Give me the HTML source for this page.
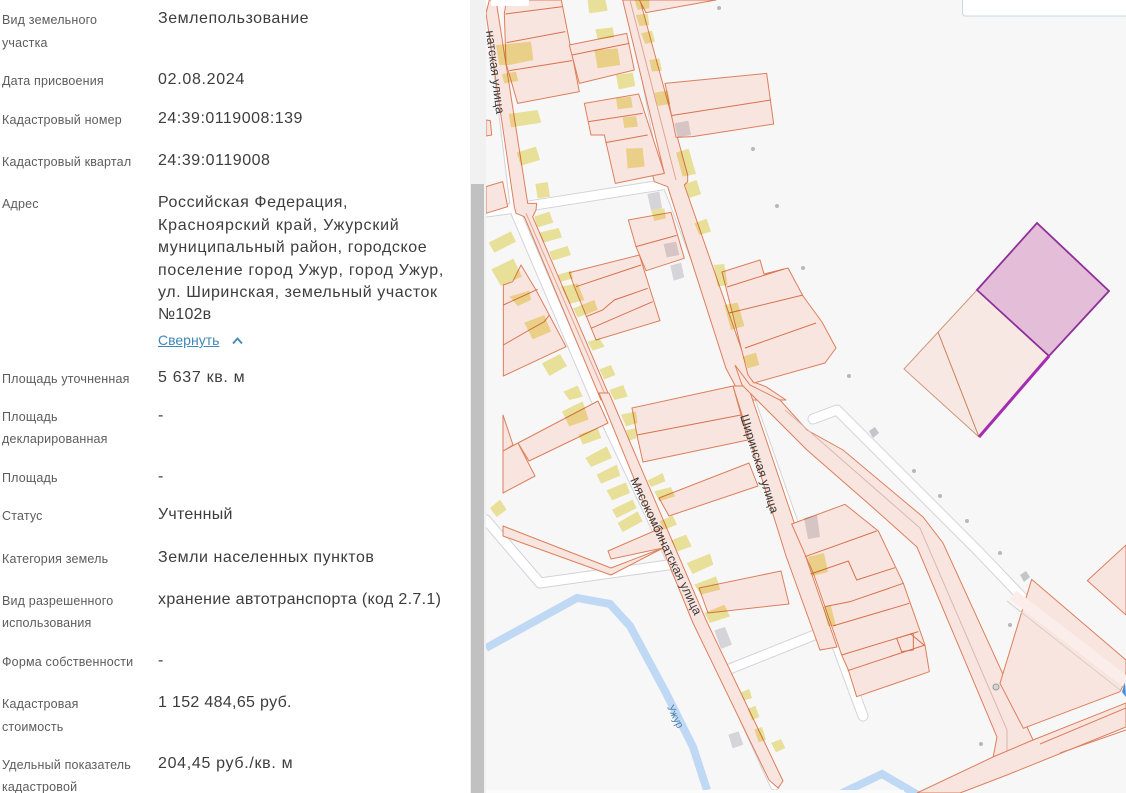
<!DOCTYPE html>
<html lang="ru"><head><meta charset="utf-8"><title>Участок</title>
<style>
html,body{margin:0;padding:0;width:1126px;height:793px;overflow:hidden;background:#fff}
body{position:relative;font-family:"Liberation Sans","DejaVu Sans",sans-serif}
.l,.v{position:absolute;white-space:nowrap;height:20px;line-height:20px;z-index:3}
.l{left:2px;font-size:12.5px;color:#5c5c5c;letter-spacing:.18px}
.v{left:158px;font-size:16px;color:#3d3d3d;letter-spacing:.55px}
#sb{position:absolute;left:470px;top:0;width:16px;height:793px;background:#f1f1f1;z-index:2}
#th{position:absolute;left:471px;top:184px;width:13px;height:609px;background:#c1c1c1;z-index:2}
#pn{position:absolute;left:0;top:0;width:470px;height:793px;background:#fff;z-index:2}
svg{position:absolute;left:0;top:0}
.p polygon,.p polyline{fill:#f9e5e0;stroke:#dc7f5c;stroke-width:3;stroke-linejoin:round}
.p line,.p path{stroke:#d8714c;stroke-width:3;fill:none}
.y{mix-blend-mode:multiply}
.y polygon{fill:#f0e79c;stroke:none}
.g{mix-blend-mode:multiply}
.g polygon{fill:#dcdce0;stroke:none}
.d circle{fill:#b5b8bc;stroke:none}
text{font-family:"Liberation Sans",sans-serif;font-size:12.500px;fill:#3a3a3a}
</style></head><body>
<svg width="1126" height="793" viewBox="0 0 1126 793" xmlns="http://www.w3.org/2000/svg">
<rect x="486" y="0" width="640" height="793" fill="#f7f7f8"/>

<!-- white roads -->
<g fill="none" stroke-linejoin="round" stroke-linecap="round">
<g stroke="#d3d3d8" stroke-width="11">
<polyline points="486,212 516,208 668,184"/>
<polyline points="490,0 516,213 596,400 702,625 775,785"/>
<polyline points="632,0 666,180 750,400 820,600 863,716"/>
<polyline points="486,520 540,583 668,565"/>
<polyline points="727,670 822,632"/>
<polyline points="813,419 837,410 980,553 1022,597 1126,682"/>
</g>
<g stroke="#ffffff" stroke-width="9">
<polyline points="486,212 516,208 668,184"/>
<polyline points="490,0 516,213 596,400 702,625 775,785"/>
<polyline points="632,0 666,180 750,400 820,600 863,716"/>
<polyline points="486,520 540,583 668,565"/>
<polyline points="727,670 822,632"/>
<polyline points="813,419 837,410 980,553 1022,597 1126,682"/>
</g>
</g>

<!-- river -->
<polyline points="486,648 577,598 610,604 630,626 666,693 693,747 707,790" fill="none" stroke="#bfd9f5" stroke-width="8"/>
<polyline points="838,795 882,774 918,795" fill="none" stroke="#bfd9f5" stroke-width="8"/>

<!-- road strips -->
<g class="p" transform="translate(486,0) scale(.33333)">
<polygon points="0,40 10,0 30,0 125,610 152,610 150,630 140,650 375,1200 345,1200 115,650 90,640 85,620"/>
<polygon points="410,0 462,0 605,525 605,545 595,555 800,1145 840,1160 900,1200 770,1200 720,1105 545,560 505,545 500,525 535,520"/>
<line x1="432" y1="0" x2="570" y2="540" style="stroke:#e0a58f"/>
<line x1="120" y1="640" x2="360" y2="1190" style="stroke:#e0a58f"/>
</g>
<polygon points="599,393 609,393 706,620 783,781 778,788 769,780 693,623" fill="#f9e5e0" stroke="#dc7f5c" stroke-width="1"/>
<polygon points="733,386 748,386 800,540 837,647 820,650 786,556" fill="#f9e5e0" stroke="#dc7f5c" stroke-width="1"/>
<polygon points="735,365 750,385 780,400 807,430 843,450 923,517 943,543 1033,740 993,758 997,737 917,547 870,505 807,450 742,385" fill="#f9e5e0" stroke="#dc7f5c" stroke-width="1"/>
<polyline points="785,410 920,528 1007,730 1007,752" fill="none" stroke="#d9b8b0" stroke-width="1"/>
<polygon points="917,793 993,757 1033,740 1126,703 1126,727 1007,775 960,793" fill="#f9e5e0" stroke="#dc7f5c" stroke-width="1"/>
<line x1="1040" y1="744" x2="1126" y2="708" stroke="#dc7f5c" stroke-width="1"/>
<polyline points="1060,753 1126,730" fill="none" stroke="#dc7f5c" stroke-width="1"/>

<!-- parcels upper -->
<g class="p" transform="translate(486,0) scale(.33333)">
<polygon points="55,40 62,0 226,0 280,275 95,310 60,190"/>
<line x1="58" y1="42" x2="230" y2="20"/><line x1="62" y1="128" x2="238" y2="95"/><line x1="70" y1="212" x2="258" y2="182"/>
<polygon points="250,135 422,100 445,210 280,250"/><line x1="258" y1="165" x2="430" y2="130"/>
<polygon points="295,310 458,282 535,520 388,550 355,405 315,405"/><line x1="308" y1="365" x2="470" y2="340"/><line x1="358" y1="428" x2="485" y2="405"/>
<polygon points="537,250 842,220 863,372 620,410 570,412"/><line x1="555" y1="347" x2="855" y2="300"/>
<polygon points="460,0 480,38 690,0"/>
<polygon points="427,660 555,637 595,775 480,812 450,740"/><line x1="450" y1="740" x2="572" y2="706"/>
<polygon points="250,818 460,765 522,962 330,1020 265,860"/>
<line x1="270" y1="860" x2="465" y2="795"/><path d="M300 950L350 930L385 900L485 865"/><line x1="315" y1="985" x2="500" y2="905"/>
<polygon points="52,855 80,845 105,795 150,870 240,1040 52,1128"/>
<line x1="52" y1="915" x2="155" y2="868"/><path d="M52 1035L130 990L175 965L190 945"/>
<polygon points="0,560 50,545 65,620 0,640"/><polygon points="0,360 13,362 17,405 0,408"/>
</g>
<g class="p">
<polygon style="stroke-width:1" points="722,272 760,260 764,274 788,268 803,296 822,322 836,348 825,363 754,383 748,375"/>
<line style="stroke-width:1" x1="727" y1="287" x2="784" y2="269"/>
<line style="stroke-width:1" x1="729" y1="313" x2="803" y2="295"/>
<line style="stroke-width:1" x1="745" y1="348" x2="816" y2="323"/>
<polygon style="stroke-width:1" points="632,408 733,386 748,440 643,462 638,440"/>
<line style="stroke-width:1" x1="637" y1="435" x2="741" y2="415"/>
<polygon style="stroke-width:1" points="659,498 749,463 758,486 669,516"/>
<polygon style="stroke-width:1" points="608,551 661,528 663,548 611,559"/>
<polygon style="stroke-width:1" points="503,526 611,568 663,548 611,575 503,536"/>
<polygon style="stroke-width:1" points="699,588 781,571 789,604 708,613"/>
<polygon style="stroke-width:1" points="518,443 598,401 608,423 529,461"/>
<polygon style="stroke-width:1" points="503,451 518,443 535,476 503,493"/>
<polygon style="stroke-width:1" points="503,415 513,445 503,451"/>
</g>
<g class="p" transform="translate(780,450) scale(.33333)">
<polygon points="35,222 195,163 295,243 370,400 435,585 448,665 230,740 205,660 185,615 100,370"/>
<line x1="75" y1="320" x2="290" y2="243"/><path d="M92 372L205 333L230 390L345 353"/><path d="M135 470L210 455L370 400"/><line x1="158" y1="528" x2="388" y2="460"/><line x1="185" y1="615" x2="415" y2="545"/><line x1="203" y1="662" x2="435" y2="585"/>
<path d="M350 565L400 550L400 600L365 605Z"/><line x1="390" y1="550" x2="432" y2="585"/>
<polygon points="755,388 1038,630 1038,690 1020,725 730,835 660,700"/>
<polygon points="1038,285 922,392 1038,495"/>
</g>

<!-- yellow + gray buildings over parcels -->
<g class="y"><g transform="translate(486,0) scale(.33333)">
<polygon points="305,0 358,0 365,32 310,40"/><polygon points="328,88 380,82 385,112 335,118"/>
<polygon points="30,135 135,125 142,180 70,195 40,195"/><polygon points="325,150 395,145 403,195 335,205"/>
<polygon points="48,222 90,215 97,243 55,250"/><polygon points="390,225 440,218 448,258 398,268"/>
<polygon points="390,295 435,290 440,322 395,328"/><polygon points="410,352 450,348 456,380 415,384"/>
<polygon points="68,342 155,330 166,368 75,382"/><polygon points="420,446 470,444 476,500 425,505"/>
<polygon points="92,458 150,440 162,480 105,497"/><polygon points="148,552 185,546 192,590 155,595"/>
<polygon points="445,0 490,0 490,25 455,30"/><polygon points="450,45 485,40 490,75 460,78"/>
<polygon points="465,100 498,92 507,125 478,132"/><polygon points="490,180 520,175 528,212 498,215"/>
<polygon points="505,278 545,272 553,312 515,318"/><polygon points="570,458 608,446 630,522 590,530"/>
<polygon points="595,552 632,540 645,582 610,594"/><polygon points="625,670 662,656 675,695 640,705"/>
<polygon points="495,630 535,625 540,655 505,663"/><polygon points="145,650 190,635 202,668 155,682"/>
<polygon points="160,698 218,684 228,712 172,728"/><polygon points="190,755 245,738 255,765 200,782"/>
<polygon points="8,728 75,694 90,725 25,758"/><polygon points="16,808 82,776 108,830 45,858"/>
<polygon points="70,890 130,872 135,900 95,918"/><polygon points="115,968 175,945 195,995 140,1018"/>
<polygon points="168,1090 222,1062 243,1098 190,1128"/><polygon points="215,825 255,812 262,835 225,845"/>
<polygon points="225,860 275,850 295,900 250,912"/><polygon points="262,925 325,900 335,930 275,952"/>
<polygon points="305,1025 340,1015 356,1040 320,1052"/><polygon points="340,1108 375,1095 388,1125 355,1138"/>
<polygon points="232,1175 275,1157 290,1190 250,1200"/><polygon points="370,1170 412,1155 425,1190 385,1200"/>
<polygon points="683,795 715,792 725,855 695,860"/><polygon points="715,915 755,908 775,978 735,990"/>
<polygon points="770,1070 810,1058 820,1095 785,1105"/>
</g></g>
<g class="g"><g transform="translate(486,0) scale(.33333)">
<polygon points="484,582 520,575 528,625 495,630"/><polygon points="565,370 607,362 615,405 575,412"/>
<polygon points="533,732 570,725 580,765 542,772"/><polygon points="553,797 585,788 595,832 563,842"/>
</g></g>
<g class="y"><g transform="translate(486,393) scale(.33333)">
<polygon points="228,55 290,25 308,80 250,100"/><polygon points="278,125 335,105 346,135 290,155"/>
<polygon points="298,195 362,160 378,195 315,222"/><polygon points="332,245 392,215 403,248 345,272"/>
<polygon points="362,292 420,268 432,300 378,322"/><polygon points="378,350 440,320 452,345 392,375"/>
<polygon points="395,390 455,355 470,385 410,417"/><polygon points="12,345 42,320 62,350 32,372"/>
<polygon points="405,65 450,55 455,90 420,100"/><polygon points="420,112 450,105 452,135 430,143"/>
<polygon points="485,262 530,240 538,265 495,282"/><polygon points="505,295 555,282 567,310 520,325"/>
<polygon points="520,385 560,368 573,395 535,410"/><polygon points="555,442 600,425 617,460 575,475"/>
<polygon points="602,510 672,482 682,515 620,543"/><polygon points="625,575 690,550 703,590 645,605"/>
<polygon points="655,660 715,635 732,670 672,690"/><polygon points="765,898 790,888 798,915 775,922"/>
<polygon points="785,948 808,938 820,972 798,982"/><polygon points="805,1010 828,1002 840,1040 818,1048"/>
<polygon points="855,1050 885,1038 898,1065 870,1078"/>
</g>
<polygon points="808,557 824,553 828,572 812,576"/>
<polygon points="823,607 831,606 836,626 828,626"/>
</g>
<g class="g"><g transform="translate(486,393) scale(.33333)">
<polygon points="685,712 717,702 738,755 705,768"/><polygon points="727,1025 758,1015 772,1055 740,1066"/>
</g>
<polygon points="804,518 817,515 820,537 808,539"/>
</g>

<!-- band across triangle -->
<polyline points="1013,595 1126,682" fill="none" stroke="#fbeeea" stroke-width="11"/>
<polyline points="1007,601 1120,690" fill="none" stroke="#d8cdcb" stroke-width="1"/>

<!-- selected parcel -->
<polygon points="977,290 1049,356 979,437 904,369" fill="#f8e8e4" stroke="#cf9a7a" stroke-width="1"/>
<line x1="938" y1="332" x2="979" y2="437" stroke="#c9805a" stroke-width="1"/>
<polygon points="1037,223 1109,291 1049,356 977,290" fill="#e4bdd9" stroke="#8e2f98" stroke-width="1.800"/>
<line x1="1049" y1="356" x2="979" y2="437" stroke="#a32cb0" stroke-width="3"/>

<!-- dots -->
<g class="d">
<circle cx="719" cy="8" r="2"/><circle cx="753" cy="149" r="2"/><circle cx="777" cy="206" r="2"/><circle cx="803" cy="268" r="2"/>
<circle cx="849" cy="376" r="2"/><circle cx="914" cy="471" r="2"/><circle cx="940" cy="496" r="2"/><circle cx="967" cy="521" r="2"/><circle cx="1000" cy="553" r="2"/><circle cx="1010" cy="625" r="2"/><circle cx="981" cy="744" r="2"/>
</g>
<polygon points="869,431 875,427 879,433 873,438" fill="#c3c6c9"/>
<polygon points="1020,575 1026,571 1030,577 1024,582" fill="#c3c6c9"/>
<circle cx="996" cy="687" r="3" fill="#d5d5d5" stroke="#999"/>

<!-- street labels -->
<text transform="translate(630,480) rotate(64.600)" letter-spacing="0.100">Мясокомбинатская  улица</text>
<text transform="translate(740,416) rotate(72.500)" letter-spacing="0">Ширинская  улица</text>
<text transform="translate(486,31) rotate(83)" letter-spacing="0.100">натская  улица</text>
<text transform="translate(667,707) rotate(64)" style="font-size:10.500px;fill:#4e7fa8">Ужур</text>

<path d="M1125 682L1122 692L1126 697Z" fill="#3f8fdd"/>
<rect x="486" y="790" width="418" height="3" fill="#fbfbfc"/>
<rect x="491" y="-3" width="38" height="9" rx="2" fill="#fff"/>
<rect x="962.500" y="-6" width="170" height="22" rx="3" fill="#fff" stroke="#c9d9e4"/>
</svg>

<div id="pn"></div><div id="sb"></div><div id="th"></div>

<div class="l" style="top:10px">Вид земельного</div>
<div class="l" style="top:33px">участка</div>
<div class="l" style="top:71px">Дата присвоения</div>
<div class="l" style="top:110px">Кадастровый номер</div>
<div class="l" style="top:152px">Кадастровый квартал</div>
<div class="l" style="top:194px">Адрес</div>
<div class="l" style="top:369px">Площадь уточненная</div>
<div class="l" style="top:407px">Площадь</div>
<div class="l" style="top:429px">декларированная</div>
<div class="l" style="top:468px">Площадь</div>
<div class="l" style="top:506px">Статус</div>
<div class="l" style="top:549px">Категория земель</div>
<div class="l" style="top:591px">Вид разрешенного</div>
<div class="l" style="top:613px">использования</div>
<div class="l" style="top:652px">Форма собственности</div>
<div class="l" style="top:694px">Кадастровая</div>
<div class="l" style="top:717px">стоимость</div>
<div class="l" style="top:755px">Удельный показатель</div>
<div class="l" style="top:777px">кадастровой</div>

<div class="v" style="top:9px;letter-spacing:.53px">Землепользование</div>
<div class="v" style="top:70px;letter-spacing:.7px">02.08.2024</div>
<div class="v" style="top:109px;letter-spacing:.48px">24:39:0119008:139</div>
<div class="v" style="top:151px;letter-spacing:.53px">24:39:0119008</div>
<div class="v" style="top:193px;letter-spacing:.57px">Российская Федерация,</div>
<div class="v" style="top:216px;letter-spacing:.78px">Красноярский край, Ужурский</div>
<div class="v" style="top:238px;letter-spacing:.59px">муниципальный район, городское</div>
<div class="v" style="top:261px;letter-spacing:.72px">поселение город Ужур, город Ужур,</div>
<div class="v" style="top:283px;letter-spacing:.58px">ул. Ширинская, земельный участок</div>
<div class="v" style="top:305px;letter-spacing:.2px">№102в</div>
<div class="v" style="top:330px;font-size:14px;letter-spacing:0;color:#3f88b5;text-decoration:underline">Свернуть</div>
<div class="v" style="top:368px;letter-spacing:.68px">5 637 кв. м</div>
<div class="v" style="top:406px">-</div>
<div class="v" style="top:467px">-</div>
<div class="v" style="top:505px;letter-spacing:.25px">Учтенный</div>
<div class="v" style="top:548px;letter-spacing:.54px">Земли населенных пунктов</div>
<div class="v" style="top:590px;letter-spacing:.33px">хранение автотранспорта (код 2.7.1)</div>
<div class="v" style="top:651px">-</div>
<div class="v" style="top:693px;letter-spacing:.32px">1 152 484,65 руб.</div>
<div class="v" style="top:754px;letter-spacing:.68px">204,45 руб./кв. м</div>
<svg width="16" height="12" viewBox="0 0 16 12" style="left:230px;top:335px;z-index:4" xmlns="http://www.w3.org/2000/svg"><path d="M3 8.500L7.500 3.500L12 8.500" fill="none" stroke="#3f88b5" stroke-width="1.800"/></svg>
</body></html>
